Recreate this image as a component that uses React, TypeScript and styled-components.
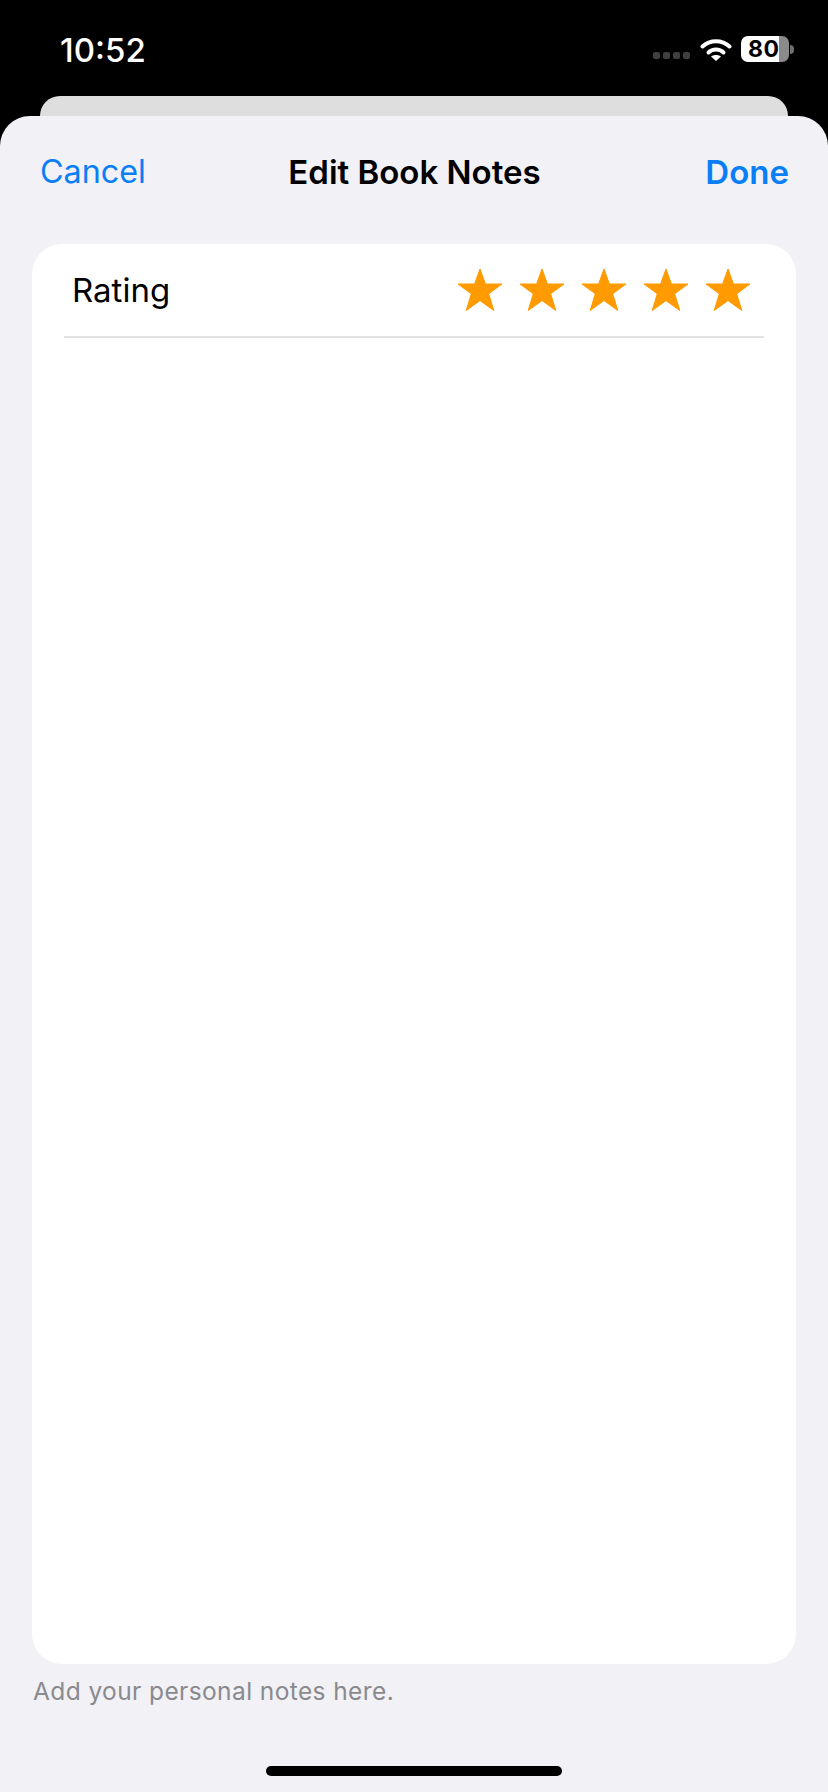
import React from 'react'
import styled, { createGlobalStyle } from 'styled-components'

const GlobalStyle = createGlobalStyle`
  html, body {
    margin: 0;
    padding: 0;
    background: #000;
    font-family: Inter, "Noto Sans", "Liberation Sans", sans-serif;
  }
`

const Screen = styled.div`
  width: 828px;
  height: 1792px;
  display: flex;
  flex-direction: column;
  background: #000;
  overflow: hidden;
`

const StatusBar = styled.div`
  height: 96px;
  flex-shrink: 0;
  display: flex;
  align-items: flex-start;
  justify-content: space-between;
  padding: 30px 34px 0 60px;
  box-sizing: border-box;
`

const Time = styled.div`
  color: #fff;
  font-size: 33px;
  line-height: 38px;
  font-weight: 500;
  margin-top: 1px;
`

const StatusIcons = styled.div`
  display: flex;
  align-items: center;
  height: 26px;
  margin-top: 6px;
`

const SignalDots = styled.div`
  display: flex;
  gap: 3px;
  margin: 12px 10px 0 0;
`

const SignalDot = styled.span`
  width: 7px;
  height: 7px;
  border-radius: 2px;
  background: #3f3f3f;
`

const WifiIcon = styled.svg`
  width: 32px;
  height: 25px;
  margin-right: 9px;
`

const Battery = styled.div`
  width: 48px;
  height: 26px;
  border-radius: 7px;
  background: linear-gradient(to right, #fff 38px, #8a8a8a 38px);
  color: #000;
  font-size: 23px;
  font-weight: 700;
  line-height: 26px;
  padding-left: 7px;
  box-sizing: border-box;
  letter-spacing: 0.5px;
`

const BatteryNub = styled.span`
  width: 4px;
  height: 9px;
  margin-left: 1px;
  border-radius: 0 4px 4px 0;
  background: #6f6f6f;
`

const BackCard = styled.div`
  height: 20px;
  flex-shrink: 0;
  margin: 0 40px;
  background: #dedede;
  border-radius: 20px 20px 0 0;
`

const Sheet = styled.div`
  flex: 1;
  display: flex;
  flex-direction: column;
  padding: 0 32px;
  background: #f1f1f6;
  border-radius: 30px 30px 0 0;
`

const NavBar = styled.div`
  height: 128px;
  flex-shrink: 0;
  display: grid;
  grid-template-columns: 1fr auto 1fr;
  align-items: center;
  box-sizing: border-box;
  padding: 0 7px 17px 8px;
`

const NavButton = styled.a<{ $bold?: boolean; $right?: boolean }>`
  color: #0a7ff5;
  font-size: ${props => (props.$bold ? '33px' : '32.3px')};
  font-weight: ${props => (props.$bold ? 600 : 400)};
  text-align: ${props => (props.$right ? 'right' : 'left')};
  cursor: pointer;
`

const Title = styled.div`
  color: #000;
  font-size: 33px;
  font-weight: 600;
`

const Card = styled.div`
  flex: 1;
  background: #fff;
  border-radius: 30px;
  padding: 0 32px;
`

const RatingRow = styled.div`
  height: 94px;
  display: flex;
  align-items: center;
  justify-content: space-between;
  box-sizing: border-box;
  border-bottom: 2px solid #e2e2e4;
  padding: 0 13px 0 8px;
`

const RatingLabel = styled.div`
  color: #000;
  font-size: 33px;
`

const Stars = styled.div`
  display: flex;
  gap: 16px;
`

const StarIcon = styled.svg`
  width: 46px;
  height: 44px;
  fill: #ff9a00;
  stroke: #ff9a00;
  stroke-width: 1;
  stroke-linejoin: round;
`

const Hint = styled.div`
  margin: 12px 0 0 1px;
  color: #8a8a8e;
  font-size: 24.5px;
  line-height: 30px;
  letter-spacing: 0.4px;
`

const HomeRow = styled.div`
  display: flex;
  justify-content: center;
  padding: 60px 0 16px;
`

const HomeBar = styled.div`
  width: 296px;
  height: 10px;
  border-radius: 5px;
  background: #000;
`

const Star = () => (
  <StarIcon viewBox="0 0 46 44">
    <polygon points="23,1 28.4,16 45,16 31.7,25.8 36.8,42.5 23,32.6 9.2,42.5 14.3,25.8 1,16 17.6,16" />
  </StarIcon>
)

export default function App() {
  return (
    <Screen>
      <GlobalStyle />
      <StatusBar>
        <Time>10:52</Time>
        <StatusIcons>
          <SignalDots>
            {[0, 1, 2, 3].map(i => (
              <SignalDot key={i} />
            ))}
          </SignalDots>
          <WifiIcon viewBox="0 0 32 25">
            <path d="M2.5 9.5C10 2.5 22 2.5 29.5 9.5" fill="none" stroke="#fff" strokeWidth="4" strokeLinecap="round" />
            <path d="M8.5 15.5C12.5 11.5 19.5 11.5 23.5 15.5" fill="none" stroke="#fff" strokeWidth="4" strokeLinecap="round" />
            <path d="M16 24L11 19.5C13.5 17.5 18.5 17.5 21 19.5Z" fill="#fff" />
          </WifiIcon>
          <Battery>80</Battery>
          <BatteryNub />
        </StatusIcons>
      </StatusBar>
      <BackCard />
      <Sheet>
        <NavBar>
          <NavButton>Cancel</NavButton>
          <Title>Edit Book Notes</Title>
          <NavButton $bold $right>
            Done
          </NavButton>
        </NavBar>
        <Card>
          <RatingRow>
            <RatingLabel>Rating</RatingLabel>
            <Stars>
              {[1, 2, 3, 4, 5].map(n => (
                <Star key={n} />
              ))}
            </Stars>
          </RatingRow>
        </Card>
        <Hint>Add your personal notes here.</Hint>
        <HomeRow>
          <HomeBar />
        </HomeRow>
      </Sheet>
    </Screen>
  )
}
